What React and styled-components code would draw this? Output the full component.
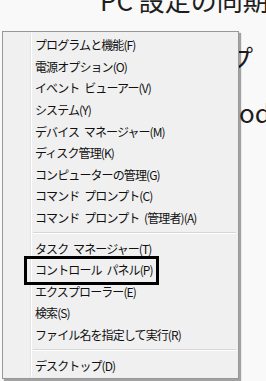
import React from 'react'
import styled, { createGlobalStyle } from 'styled-components'

const GlobalStyle = createGlobalStyle`
  html, body {
    margin: 0;
    padding: 0;
    background: #f9f9f9;
  }
  #root {
    width: 266px;
    height: 381px;
  }
`

const Page = styled.div`
  position: relative;
  width: 266px;
  height: 381px;
  overflow: hidden;
  background: #f9f9f9;
  font-family: 'Noto Sans CJK JP', 'Noto Sans', sans-serif;
`

const Backdrop = styled.div`
  display: flex;
  flex-direction: column;
`

const BigLine = styled.div`
  font-family: 'Noto Sans CJK JP', 'Noto Sans', sans-serif;
  font-size: 26px;
  line-height: 30px;
  color: #1e1e1e;
  white-space: nowrap;
  padding-left: ${(p) => p.indent}px;
  margin-top: ${(p) => p.top}px;
`

const Menu = styled.div`
  position: absolute;
  left: 2px;
  top: 31px;
  width: 235px;
  display: flex;
  flex-direction: column;
  padding: 2px 0;
  background: #f0f0f0;
  border: 1px solid #979797;
  box-shadow: 2px 2px 1px rgba(0, 0, 0, 0.35);
  font-size: 12px;
  color: #111;
  letter-spacing: -0.9px;
  word-spacing: 3px;

  &::before {
    content: '';
    position: absolute;
    left: 27px;
    top: 1px;
    bottom: 1px;
    width: 1px;
    background: #e2e3e3;
    box-shadow: 1px 0 0 #ffffff;
  }
`

const Item = styled.div`
  position: relative;
  height: 21.6px;
  display: flex;
  align-items: center;
  padding-left: 32px;
  white-space: pre;
`

const Separator = styled.div`
  height: 1px;
  margin: 4px 2px 3px 30px;
  background: #d7d7d7;
  border-bottom: 1px solid #ffffff;
`

const Highlight = styled.div`
  position: absolute;
  left: 21px;
  top: -3px;
  width: 129px;
  height: 23px;
  border: 3px solid #000;
  pointer-events: none;
`

const groups = [
  [
    'プログラムと機能(F)',
    '電源オプション(O)',
    'イベント ビューアー(V)',
    'システム(Y)',
    'デバイス マネージャー(M)',
    'ディスク管理(K)',
    'コンピューターの管理(G)',
    'コマンド プロンプト(C)',
    'コマンド プロンプト (管理者)(A)',
  ],
  [
    'タスク マネージャー(T)',
    'コントロール パネル(P)',
    'エクスプローラー(E)',
    '検索(S)',
    'ファイル名を指定して実行(R)',
  ],
  ['デスクトップ(D)'],
]

export default function App() {
  return (
    <Page>
      <GlobalStyle />
      <Backdrop>
        <BigLine indent={100} top={-15}>PC 設定の同期</BigLine>
        <BigLine indent={227} top={28}>プ</BigLine>
        <BigLine indent={218} top={24}>Mode</BigLine>
      </Backdrop>
      <Menu>
        {groups.map((group, gi) => (
          <React.Fragment key={gi}>
            {gi > 0 && <Separator />}
            {group.map((label) => (
              <Item key={label}>
                {label}
                {label === 'コントロール パネル(P)' && <Highlight />}
              </Item>
            ))}
          </React.Fragment>
        ))}
      </Menu>
    </Page>
  )
}
